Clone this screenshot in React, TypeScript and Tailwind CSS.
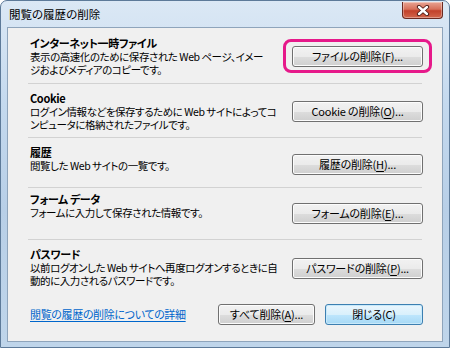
import React from 'react';

type Section = {
  title: string;
  lines: string[];
  label: React.ReactNode;
  box: string;
  btnTop: string;
  highlight?: boolean;
};

const u = (c: string) => <span className="underline underline-offset-[2px]">{c}</span>;

const sections: Section[] = [
  {
    title: 'インターネット一時ファイル',
    lines: ['表示の高速化のために保存された Web ページ、イメー', 'ジおよびメディアのコピーです。'],
    label: <>ファイルの削除(F)...</>,
    box: 'h-[55px] pt-[9px]',
    btnTop: 'mt-[9px]',
    highlight: true,
  },
  {
    title: 'Cookie',
    lines: ['ログイン情報などを保存するために Web サイトによってコ', 'ンピュータに格納されたファイルです。'],
    label: <>Cookie の削除({u('O')})...</>,
    box: 'h-[53px] pt-[8px]',
    btnTop: 'mt-[9px]',
  },
  {
    title: '履歴',
    lines: ['閲覧した Web サイトの一覧です。'],
    label: <>履歴の削除({u('H')})...</>,
    box: 'h-[49px] pt-[8px]',
    btnTop: 'mt-[8px]',
  },
  {
    title: 'フォーム データ',
    lines: ['フォームに入力して保存された情報です。'],
    label: <>フォームの削除({u('E')})...</>,
    box: 'h-[51px] pt-[5px]',
    btnTop: 'mt-[10px]',
  },
  {
    title: 'パスワード',
    lines: ['以前ログオンした Web サイトへ再度ログオンするときに自', '動的に入力されるパスワードです。'],
    label: <>パスワードの削除({u('P')})...</>,
    box: 'h-[55px] pt-[8px]',
    btnTop: 'mt-[10px]',
  },
];

function VistaButton({
  children,
  className = '',
  primary = false,
}: {
  children: React.ReactNode;
  className?: string;
  primary?: boolean;
}) {
  return (
    <button
      className={`h-[21px] rounded-[3px] border text-[11px] tracking-[-0.2px] leading-none text-black flex items-center justify-center ${
        primary
          ? 'border-[#3c7fb1] bg-[linear-gradient(#eaf6fd_0%,#d9f0fc_50%,#bee6fd_51%,#a7d9f5_100%)] shadow-[inset_0_0_0_1px_#c8e9fa]'
          : 'border-[#707070] bg-[linear-gradient(#f2f2f2_0%,#ebebeb_50%,#dddddd_51%,#cfcfcf_100%)] shadow-[inset_0_0_0_1px_#fcfcfc]'
      } ${className}`}
    >
      {children}
    </button>
  );
}

function CloseButton() {
  return (
    <div className="mt-[1px] mr-[6px] w-[41px] h-[17px] rounded-b-[4px] border border-t-0 border-[#6b2a22] bg-[linear-gradient(#e8a493_0%,#d7705a_45%,#c2412b_55%,#d2664c_100%)] flex items-center justify-center shadow-[inset_0_0_0_1px_rgba(255,255,255,0.35)]">
      <svg width="14" height="11" viewBox="0 0 14 11">
        <path d="M3 2 L11 9 M11 2 L3 9" stroke="#4a1a14" strokeWidth="4.2" strokeLinecap="round" />
        <path d="M3 2 L11 9 M11 2 L3 9" stroke="#ffffff" strokeWidth="2.4" strokeLinecap="round" />
      </svg>
    </div>
  );
}

export default function App() {
  return (
    <div className="w-[450px] h-[348px] bg-white font-['Meiryo_UI','Noto_Sans_CJK_JP',sans-serif] [font-feature-settings:'palt']">
      <div className="w-[450px] h-[348px] rounded-t-[7px] border border-[#5d7a99] bg-[linear-gradient(180deg,#dbe8f5_0%,#c4d9ee_30%,#b8cfe7_60%,#bfd5ea_100%)] flex flex-col px-[6px] pb-[5px]">
        <div className="h-[26px] flex items-start justify-between">
          <div className="pl-[2px] pt-[5px] text-[11.5px] leading-[16px] text-black">閲覧の履歴の削除</div>
          <div className="-mr-[6px]">
            <CloseButton />
          </div>
        </div>
        <div className="flex-1 border border-[#8ea4bb] bg-[#f0f0f0] flex flex-col">
          {sections.map((s, i) => (
            <React.Fragment key={s.title}>
              {i > 0 && <div className="ml-[20px] mr-[20px] h-px bg-[#d2d2d2]" />}
              <div className={`flex items-start justify-between pl-[22px] pr-[19px] ${s.box}`}>
                <div className="w-[250px] leading-[13px] text-black whitespace-nowrap">
                  <div className="font-bold text-[11px] tracking-[-0.35px]">{s.title}</div>
                  {s.lines.map((l) => (
                    <div key={l} className="text-[10.5px] tracking-[-0.45px]">{l}</div>
                  ))}
                </div>
                <div className={`relative shrink-0 ${s.btnTop}`}>
                  {s.highlight && (
                    <div className="absolute -left-[9px] -right-[9px] -top-[7px] -bottom-[6px] rounded-[8px] border-[3px] border-[#e6198a]" />
                  )}
                  <VistaButton className="relative w-[131px]">{s.label}</VistaButton>
                </div>
              </div>
            </React.Fragment>
          ))}
          <div className="mt-[9px] flex items-center pl-[22px] pr-[19px]">
            <a href="#" className="text-[11px] tracking-[-0.35px] leading-[13px] text-[#0066cc] underline underline-offset-[2px]">
              閲覧の履歴の削除についての詳細
            </a>
            <div className="ml-auto flex gap-[10px]">
              <VistaButton className="w-[97px]">すべて削除({u('A')})...</VistaButton>
              <VistaButton primary className="w-[98px]">閉じる(C)</VistaButton>
            </div>
          </div>
        </div>
      </div>
    </div>
  );
}
